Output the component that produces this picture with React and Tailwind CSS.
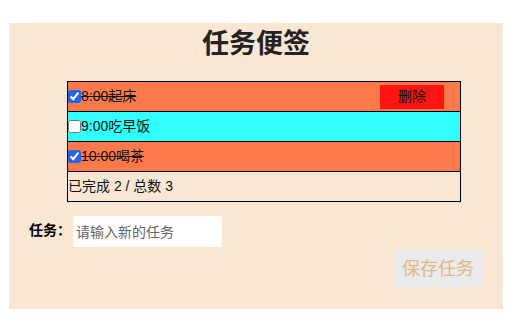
import { useState } from 'react'

const font = { fontFamily: '"Liberation Sans", "Noto Sans CJK SC", sans-serif' }

function App() {
  const [tasks, setTasks] = useState([
    { id: 1, text: '8:00起床', done: true },
    { id: 2, text: '9:00吃早饭', done: false },
    { id: 3, text: '10:00喝茶', done: true },
  ])
  const [hover, setHover] = useState(1)
  const [value, setValue] = useState('')

  const toggle = (id) => {
    setTasks(tasks.map((t) => (t.id === id ? { ...t, done: !t.done } : t)))
  }

  const remove = (id) => {
    setTasks(tasks.filter((t) => t.id !== id))
  }

  const save = () => {
    if (!value.trim()) return
    setTasks([...tasks, { id: Date.now(), text: value, done: false }])
    setValue('')
  }

  const doneCount = tasks.filter((t) => t.done).length

  return (
    <div className="min-h-screen bg-white pt-[23px] pl-[9px]" style={font}>
      <div className="w-[494px] h-[286px] bg-[#f9e7d3] pt-[4px]">
        {/* Title */}
        <h1 className="text-center text-[27px] leading-[34px] font-bold text-[#222]">任务便签</h1>

        {/* List */}
        <div className="ml-[58px] mt-[20px] w-[394px] border border-black text-[14px] text-[#111]">
          {tasks.map((t) => (
            <div
              key={t.id}
              onMouseEnter={() => setHover(t.id)}
              className={`flex items-center h-[30px] border-b border-black ${t.done ? 'bg-[#fc7a4a]' : 'bg-[#30fffe]'}`}
            >
              <input
                type="checkbox"
                checked={t.done}
                onChange={() => toggle(t.id)}
                className="m-0 w-[13px] h-[13px] accent-[#2563eb]"
              />
              <span className={t.done ? 'line-through' : ''}>{t.text}</span>
              {hover === t.id && (
                <button
                  onClick={() => remove(t.id)}
                  className="ml-auto mr-[16px] w-[64px] h-[24px] bg-[#ff1414] text-[14px] text-[#111]"
                >
                  删除
                </button>
              )}
            </div>
          ))}
          <div className="flex items-center h-[29px]">
            已完成 {doneCount} / 总数 {tasks.length}
          </div>
        </div>

        {/* Input */}
        <div className="flex items-start ml-[20px] mt-[14px]">
          <label className="text-[14px] font-bold text-black mt-[4px]">任务：</label>
          <input
            value={value}
            onChange={(e) => setValue(e.target.value)}
            placeholder="请输入新的任务"
            className="ml-[2px] w-[149px] h-[31px] bg-white px-[3px] text-[14px] outline-none placeholder:text-[#666]"
          />
        </div>
        <div className="flex justify-end mr-[20px] mt-[3px]">
          <button
            onClick={save}
            className="w-[90px] h-[38px] rounded-[5px] bg-[#ebebeb] text-[18px] text-[#deb887]"
          >
            保存任务
          </button>
        </div>
      </div>
    </div>
  )
}

export default App
